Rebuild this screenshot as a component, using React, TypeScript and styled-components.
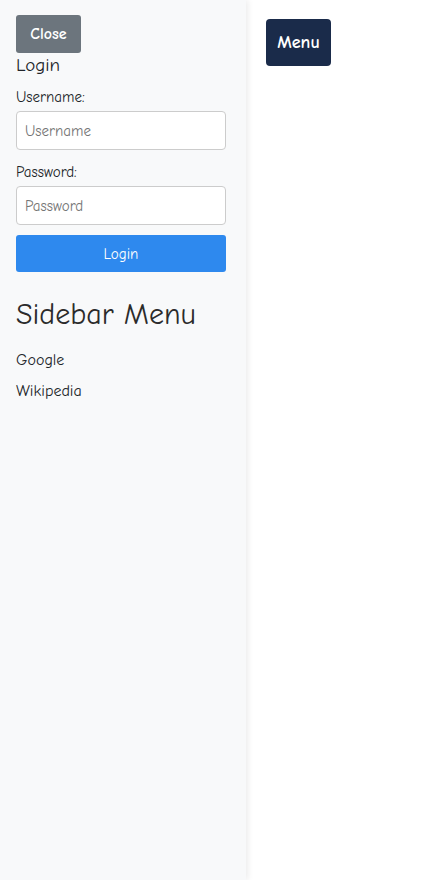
import React from "react";
import styled, { createGlobalStyle } from "styled-components";

const GlobalStyle = createGlobalStyle`
  html, body {
    margin: 0;
    padding: 0;
    background: #ffffff;
    font-family: "Comic Sans MS", "Comic Neue", cursive, "Noto Sans", sans-serif;
    color: #212529;
  }
  * {
    box-sizing: border-box;
  }
`;

const links = [
  { label: "Google", href: "#google" },
  { label: "Wikipedia", href: "#wikipedia" },
];

const App: React.FC = () => {
  return (
    <>
      <GlobalStyle />
      <Page>
        <Sidebar>
          <CloseButton type="button">Close</CloseButton>
          <LoginForm onSubmit={(e) => e.preventDefault()}>
            <FormTitle>Login</FormTitle>
            <Label htmlFor="username">Username:</Label>
            <Input id="username" type="text" placeholder="Username" />
            <Label htmlFor="password">Password:</Label>
            <Input id="password" type="password" placeholder="Password" />
            <SubmitButton type="submit">Login</SubmitButton>
          </LoginForm>
          <MenuTitle>Sidebar Menu</MenuTitle>
          <LinkList>
            {links.map((link) => (
              <li key={link.label}>
                <MenuLink href={link.href}>{link.label}</MenuLink>
              </li>
            ))}
          </LinkList>
        </Sidebar>
        <Main>
          <MenuButton type="button">Menu</MenuButton>
        </Main>
      </Page>
    </>
  );
};

export default App;

const Page = styled.div`
  display: flex;
  min-height: 100vh;
`;

const Sidebar = styled.aside`
  width: 246px;
  flex-shrink: 0;
  min-height: 100vh;
  padding: 15px 20px 16px 16px;
  background-color: #f8f9fa;
  box-shadow: 2px 0 6px rgba(0, 0, 0, 0.08);
  display: flex;
  flex-direction: column;
  align-items: flex-start;
`;

const CloseButton = styled.button`
  width: 65px;
  height: 38px;
  border: none;
  border-radius: 3px;
  background-color: #6c757d;
  color: #ffffff;
  font-family: inherit;
  font-size: 16px;
  font-weight: bold;
  cursor: pointer;
`;

const LoginForm = styled.form`
  width: 100%;
  display: flex;
  flex-direction: column;
`;

const FormTitle = styled.h3`
  margin: 1px 0 12px;
  font-size: 19px;
  font-weight: normal;
  line-height: 22px;
`;

const Label = styled.label`
  font-size: 15px;
  line-height: 18px;
  margin-bottom: 5px;
`;

const Input = styled.input`
  width: 100%;
  height: 39px;
  padding: 0 8px;
  margin-bottom: 13px;
  border: 1px solid #cccccc;
  border-radius: 4px;
  background: #ffffff;
  font-family: inherit;
  font-size: 15px;

  &::placeholder {
    color: #757575;
  }
`;

const SubmitButton = styled.button`
  width: 100%;
  height: 37px;
  margin-top: -3px;
  border: none;
  border-radius: 3px;
  background-color: #2e89ee;
  color: #ffffff;
  font-family: inherit;
  font-size: 15px;
  cursor: pointer;
`;

const MenuTitle = styled.h2`
  margin: 25px 0 18px;
  font-size: 30px;
  font-weight: normal;
  line-height: 36px;
  color: #2b2b2b;
`;

const LinkList = styled.ul`
  list-style: none;
  margin: 0;
  padding: 0;
  display: flex;
  flex-direction: column;
  gap: 12px;
`;

const MenuLink = styled.a`
  font-size: 16px;
  line-height: 19px;
  color: #212529;
  text-decoration: none;
`;

const Main = styled.main`
  flex: 1;
  padding: 19px 20px;
`;

const MenuButton = styled.button`
  width: 65px;
  height: 47px;
  border: none;
  border-radius: 4px;
  background-color: #1a2b4a;
  color: #ffffff;
  font-family: inherit;
  font-size: 18px;
  font-weight: bold;
  cursor: pointer;
`;
